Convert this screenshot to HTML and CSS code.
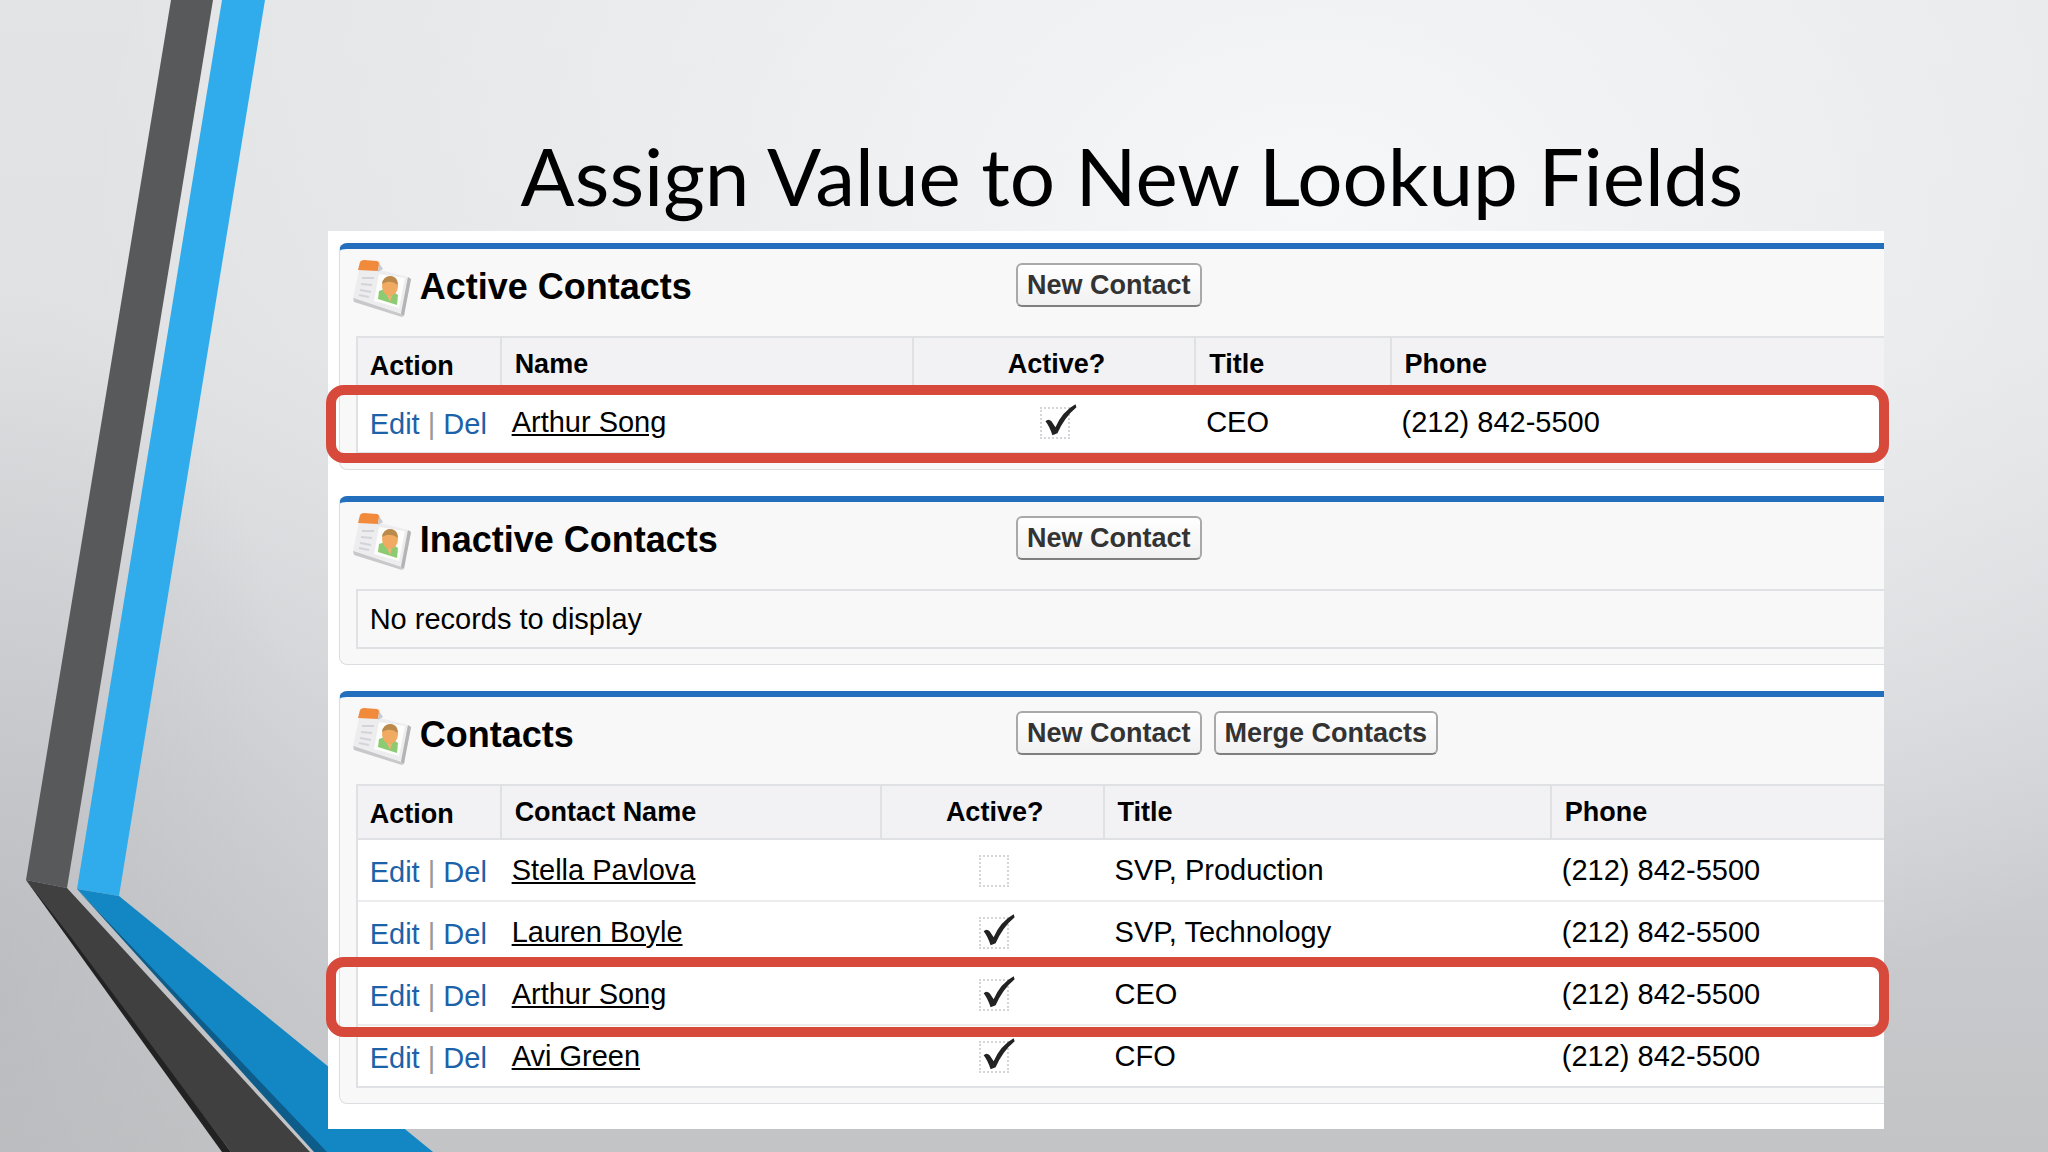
FILE: index.html
```html
<!DOCTYPE html>
<html lang="en">
<head>
    <meta charset="UTF-8">
    <meta name="viewport" content="width=device-width, initial-scale=1.0">
    <title>Assign Value to New Lookup Fields</title>
    <link rel="stylesheet" href="styles.css">
</head>
<body>
    <!-- Ribbon on the left side of the slide -->
    <svg class="ribbon" viewBox="0 0 440 1152" aria-hidden="true">
        <polygon points="171,0 213,0 67,888 26,880" fill="#58595b"/>
        <polygon points="222,0 265,0 119,896 77,889" fill="#30acec"/>
        <polygon points="26,880 67,888 310,1152 231,1152" fill="#404041"/>
        <polygon points="26,880 222,1152 231,1152 70,936" fill="#222223"/>
        <polygon points="77,889 314,1152 330,1152" fill="#0d5c8a"/>
        <polygon points="77,889 119,896 433,1152 327,1152" fill="#1287c4"/>
    </svg>

    <!-- Shared drawings -->
    <svg class="defs" aria-hidden="true">
        <symbol id="contact-card" viewBox="0 0 60 60">
            <path d="M8 13 L2 42 L51 58 L59 20 L30 12 Z" fill="#d2d2d4"/>
            <path d="M7 11 L1 39 L49 55 L56 18 L28 11 Z" fill="#ededef"/>
            <path d="M1 39 L49 55 L50 58 L2 43 Z" fill="#c8c8ca"/>
            <path d="M56 18 L59 20 L52 57 L49 55 Z" fill="#b4b4b6"/>
            <path d="M27 15 L53 19 L47 49 L22 42 Z" fill="#fcfcfa"/>
            <path d="M10 19 h12 M9 25 l11 1 M8 31 l11 2 M7 36 l10 2" stroke="#d3d4d8" stroke-width="2"/>
            <path d="M8 3 Q9 1 12 1 L25 2 Q28 3 27 6 L26 12 L6 11 Z" fill="#f28a3c"/>
            <path d="M27 4 L31 10 L26 13 Z" fill="#c8cacf"/>
            <path d="M27 32 Q36 28 46 36 L45 46 L26 40 Z" fill="#8ccb72"/>
            <ellipse cx="38" cy="27" rx="8" ry="10" fill="#f0aa62"/>
            <path d="M30 25 Q31 17 39 17 Q46 18 46 26 Q38 20 30 25 Z" fill="#b98a4c"/>
            <path d="M35 36 L40 37 L38 43 Z" fill="#f3b274"/>
        </symbol>
    </svg>

    <main class="slide">
        <h1>Assign Value to New Lookup Fields</h1>

        <div class="panel">
            <section class="related">
                <div class="related-head">
                    <h2><svg class="icon" aria-hidden="true"><use href="#contact-card"/></svg>Active Contacts</h2>
                    <div class="buttons">
                        <button type="button">New Contact</button>
                    </div>
                </div>
                <table class="list active-list">
                    <thead>
                        <tr>
                            <th class="action">Action</th>
                            <th class="name">Name</th>
                            <th class="active">Active?</th>
                            <th class="title">Title</th>
                            <th>Phone</th>
                        </tr>
                    </thead>
                    <tbody>
                        <tr class="highlight">
                            <td class="action"><a href="#">Edit</a> | <a href="#">Del</a></td>
                            <td><a href="#">Arthur Song</a></td>
                            <td class="active"><input type="checkbox" aria-label="Arthur Song active" checked></td>
                            <td>CEO</td>
                            <td>(212) 842-5500</td>
                        </tr>
                    </tbody>
                </table>
            </section>

            <section class="related">
                <div class="related-head">
                    <h2><svg class="icon" aria-hidden="true"><use href="#contact-card"/></svg>Inactive Contacts</h2>
                    <div class="buttons">
                        <button type="button">New Contact</button>
                    </div>
                </div>
                <p class="empty">No records to display</p>
            </section>

            <section class="related">
                <div class="related-head">
                    <h2><svg class="icon" aria-hidden="true"><use href="#contact-card"/></svg>Contacts</h2>
                    <div class="buttons">
                        <button type="button">New Contact</button>
                        <button type="button">Merge Contacts</button>
                    </div>
                </div>
                <table class="list contact-list">
                    <thead>
                        <tr>
                            <th class="action">Action</th>
                            <th class="name">Contact Name</th>
                            <th class="active">Active?</th>
                            <th class="title">Title</th>
                            <th>Phone</th>
                        </tr>
                    </thead>
                    <tbody>
                        <tr>
                            <td class="action"><a href="#">Edit</a> | <a href="#">Del</a></td>
                            <td><a href="#">Stella Pavlova</a></td>
                            <td class="active"><input type="checkbox" aria-label="Stella Pavlova active"></td>
                            <td>SVP, Production</td>
                            <td>(212) 842-5500</td>
                        </tr>
                        <tr>
                            <td class="action"><a href="#">Edit</a> | <a href="#">Del</a></td>
                            <td><a href="#">Lauren Boyle</a></td>
                            <td class="active"><input type="checkbox" aria-label="Lauren Boyle active" checked></td>
                            <td>SVP, Technology</td>
                            <td>(212) 842-5500</td>
                        </tr>
                        <tr class="highlight">
                            <td class="action"><a href="#">Edit</a> | <a href="#">Del</a></td>
                            <td><a href="#">Arthur Song</a></td>
                            <td class="active"><input type="checkbox" aria-label="Arthur Song active" checked></td>
                            <td>CEO</td>
                            <td>(212) 842-5500</td>
                        </tr>
                        <tr>
                            <td class="action"><a href="#">Edit</a> | <a href="#">Del</a></td>
                            <td><a href="#">Avi Green</a></td>
                            <td class="active"><input type="checkbox" aria-label="Avi Green active" checked></td>
                            <td>CFO</td>
                            <td>(212) 842-5500</td>
                        </tr>
                    </tbody>
                </table>
            </section>
        </div>
    </main>
</body>
</html>
```

FILE: styles.css
```css
* {
    box-sizing: border-box;
}
body {
    margin: 0;
    min-height: 100vh;
    font-family: "Liberation Sans", Arial, sans-serif;
    color: #000;
    background:
        radial-gradient(ellipse 60% 75% at 64% 18%, #f6f7f9 0%, rgba(246,247,249,0) 100%),
        radial-gradient(ellipse 16% 60% at 0% 85%, rgba(176,178,182,0.5) 0%, rgba(176,178,182,0) 100%),
        linear-gradient(180deg, #e2e4e5 0%, #dfe1e3 30%, #d4d5d8 60%, #c8c9cc 85%, #c3c4c6 100%);
}
.ribbon {
    position: absolute;
    top: 0;
    left: 0;
    width: 440px;
    height: 1152px;
}
.defs {
    position: absolute;
    width: 0;
    height: 0;
}
.slide {
    position: relative;
    padding: 120px 8% 22px 16%;
}
h1 {
    margin: 0;
    padding-left: 52px;
    font-family: Lato, "Open Sans", sans-serif;
    font-size: 80px;
    font-weight: 400;
    line-height: 111px;
    text-align: center;
}
.panel {
    padding: 12px 0 25px 11px;
    background: #fff;
}

/* Related lists */
.related {
    padding: 0 0 15px 16px;
    border: 1px solid #dcdde0;
    border-top: 6px solid #236fbd;
    border-right: 0;
    border-radius: 8px 0 0 8px;
    background: #f8f8f9;
}
.related + .related {
    margin-top: 26px;
}
.related-head {
    display: grid;
    grid-template-columns: 43.2% auto;
    height: 87px;
    padding-top: 10px;
}
h2 {
    display: flex;
    align-items: flex-start;
    gap: 8px;
    margin: 0 0 0 -4px;
    font-size: 36px;
    line-height: 56px;
}
.icon {
    width: 60px;
    height: 60px;
}
.buttons {
    display: flex;
    align-items: flex-start;
    gap: 12px;
    padding-top: 4px;
}
button {
    height: 44px;
    padding: 0 9px;
    border: 2px solid #a9a9ab;
    border-bottom-color: #7f7f80;
    border-radius: 6px;
    background: linear-gradient(#fff, #f1f1f2);
    font-family: inherit;
    font-size: 27px;
    font-weight: bold;
    line-height: 36px;
    color: #333;
}
.list {
    width: 100%;
    table-layout: fixed;
    border-collapse: separate;
    border-spacing: 0;
    border: 2px solid #e0e1e4;
    border-right: 0;
    background: #fff;
}
th,
td {
    padding: 0 0 0 12px;
    text-align: left;
    white-space: nowrap;
}
th {
    height: 54px;
    border-bottom: 2px solid #e0e1e4;
    background: #f2f2f4;
    font-size: 27px;
}
th + th {
    padding-left: 13px;
    border-left: 2px solid #e0e1e4;
}
td {
    height: 62px;
    border-bottom: 2px solid #ececee;
    font-size: 29px;
}
tr:last-child td {
    height: 60px;
    border-bottom: 0;
}
.list .action {
    width: 9.3%;
    padding: 5px 0 0 12px;
}
.list .active {
    padding: 0 0 0 5px;
    text-align: center;
}
.active-list .name {
    width: 27%;
}
.active-list .active {
    width: 18.5%;
}
.active-list .title {
    width: 12.8%;
}
.contact-list .name {
    width: 24.9%;
}
.contact-list .active {
    width: 14.6%;
}
.contact-list .title {
    width: 29.3%;
}
td a {
    color: #000;
}
td.action {
    color: #999;
}
td.action a {
    color: #1c62a8;
    text-decoration: none;
}
input[type="checkbox"] {
    appearance: none;
    position: relative;
    width: 30px;
    height: 32px;
    margin: 0;
    border: 2px dotted #d6d4d8;
    vertical-align: middle;
}
/* tick mark reaches out of the box */
input[type="checkbox"]:checked::after {
    content: "";
    position: absolute;
    top: -6px;
    left: 2px;
    width: 34px;
    height: 34px;
    background: #222;
    clip-path: path("M1 18 Q4 15 7 18 L11 24 Q18 8 31 1 L32 4 Q20 14 13 30 L8 32 Q5 23 1 18 Z");
}
.empty {
    margin: 0;
    padding: 0 12px;
    border: 2px solid #e0e1e4;
    border-right: 0;
    font-size: 29px;
    line-height: 56px;
}

/* Red outline round a row */
.highlight {
    position: relative;
}
.highlight td:last-child::after {
    content: "";
    position: absolute;
    top: -7px;
    right: -5px;
    bottom: -11px;
    left: -32px;
    border: 10px solid #d6493b;
    border-radius: 18px;
    pointer-events: none;
}
```
